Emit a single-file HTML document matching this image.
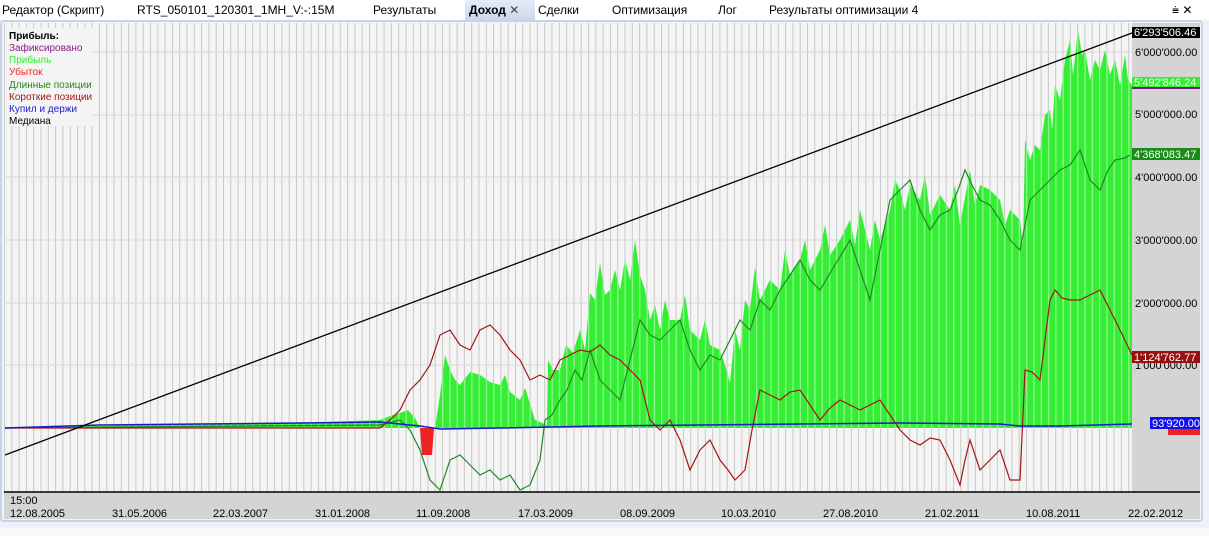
<!DOCTYPE html>
<html><head><meta charset="utf-8"><style>
body{margin:0;width:1209px;height:536px;overflow:hidden;background:#eef2f8;font-family:"Liberation Sans","DejaVu Sans",sans-serif;}
.tabs{position:absolute;left:0;top:0;width:1209px;height:20px;background:#fff;font-size:12px;color:#000}
.tabs span{position:absolute;top:3px}
</style></head><body>
<div class="tabs">
<span style="left:2px">Редактор (Скрипт)</span>
<span style="left:137px">RTS_050101_120301_1MH_V:-:15M</span>
<span style="left:373px">Результаты</span>
<div style="position:absolute;left:465px;top:0;width:70px;height:20px;background:linear-gradient(#e4edf7,#c9d9ec)"></div>
<span style="left:469px;font-weight:bold">Доход <span style="position:static;font-weight:normal;color:#444">✕</span></span>
<span style="left:538px">Сделки</span>
<span style="left:612px">Оптимизация</span>
<span style="left:718px">Лог</span>
<span style="left:769px">Результаты оптимизации 4</span>
<span style="left:1172px">⩧ ✕</span>
</div>
<div style="position:absolute;left:0;top:20px;width:1203px;height:502px;border:2px solid #c3d5ea;border-radius:4px;background:#f4f4f4;box-sizing:border-box"></div>
<svg style="position:absolute;left:0;top:0" width="1209" height="536" xmlns="http://www.w3.org/2000/svg">
<defs><pattern id="vg" x="4" y="0" width="7.3" height="10" patternUnits="userSpaceOnUse"><rect x="0" y="0" width="1" height="10" fill="#c8c8c8"/></pattern>
<pattern id="vg2" x="4" y="0" width="7.3" height="10" patternUnits="userSpaceOnUse"><rect x="0" y="0" width="1.3" height="10" fill="#8ff58f"/></pattern>
<clipPath id="gc"><polygon points="5,428 100,426 200,424 300,423 380,420 390,416 400,413 408,410 415,418 420,428 435,428 440,395 445,355 450,370 455,380 460,385 470,372 480,375 490,382 500,385 505,375 510,392 520,400 525,388 535,420 547,425 548,360 553,370 560,370 566,345 573,353 580,330 585,350 590,293 595,300 600,263 605,295 610,290 615,270 620,290 625,260 630,280 635,240 640,275 645,290 650,320 655,305 660,330 665,300 670,320 680,320 685,295 690,330 700,340 705,320 710,345 720,350 725,365 730,383 735,330 740,350 745,300 750,310 755,267 760,300 770,280 780,290 785,250 790,275 800,260 805,240 810,270 820,250 825,225 830,255 840,240 850,220 855,245 860,210 870,250 875,220 880,240 890,210 895,180 900,190 905,210 910,185 920,200 925,175 930,215 940,195 950,210 955,185 960,225 970,170 975,205 980,185 990,190 1000,200 1005,225 1010,210 1020,220 1023,245 1025,140 1030,160 1035,145 1040,150 1045,115 1050,110 1052,130 1055,85 1060,100 1065,60 1070,40 1073,75 1078,30 1082,55 1085,50 1090,80 1095,60 1100,70 1105,50 1110,75 1115,60 1120,85 1125,55 1128,80 1132,85 1132,428"/></clipPath></defs>
<rect x="4" y="23" width="1128" height="469" fill="#f4f4f4"/>
<rect x="4" y="23" width="1128" height="469" fill="url(#vg)"/>
<g stroke="#d8d8d8" stroke-width="1">
<line x1="4" x2="1132" y1="52" y2="52"/><line x1="4" x2="1132" y1="115" y2="115"/><line x1="4" x2="1132" y1="177" y2="177"/><line x1="4" x2="1132" y1="240" y2="240"/><line x1="4" x2="1132" y1="303" y2="303"/><line x1="4" x2="1132" y1="365" y2="365"/></g>
<rect x="1132" y="23" width="68" height="469" fill="#d4d4d4"/>
<rect x="4" y="492" width="1196" height="27" fill="#d4d4d4"/>
<line x1="4" x2="1200" y1="492" y2="492" stroke="#000" stroke-width="1.5"/>
<g clip-path="url(#gc)"><rect x="4" y="23" width="1128" height="410" fill="#33ee33"/><rect x="4" y="23" width="1128" height="410" fill="url(#vg2)"/></g>
<polygon fill="#ee2222" points="420,428 422,455 432,455 434,428"/>
<polyline fill="none" stroke="#228822" stroke-width="1.2" points="5,428 380,425 400,420 410,430 420,450 430,480 440,490 450,460 460,455 470,465 480,475 490,470 500,480 510,475 520,490 530,485 540,460 545,420 552,415 560,400 567,390 575,370 582,380 590,350 595,365 600,380 610,390 620,400 630,360 640,320 650,335 660,340 670,330 680,320 690,350 700,370 710,355 720,360 730,340 740,320 750,330 760,300 770,310 780,290 790,275 800,260 810,280 820,290 835,265 850,240 860,270 870,300 880,250 890,200 900,190 910,180 920,210 930,230 940,215 950,210 958,190 965,170 972,185 980,200 990,205 1000,220 1010,240 1020,250 1030,200 1045,185 1060,170 1070,165 1080,150 1085,165 1090,180 1100,190 1108,170 1115,160 1125,158 1130,155"/>
<polyline fill="none" stroke="#a01818" stroke-width="1.2" points="5,428 380,428 390,420 400,410 410,390 420,380 430,365 440,335 450,330 460,345 470,350 480,330 490,325 500,335 510,350 520,360 530,380 540,375 550,380 560,360 570,355 580,350 590,352 600,345 610,355 620,360 630,370 640,380 650,420 660,430 670,420 680,440 690,470 700,450 710,440 720,460 728,470 735,480 745,470 752,430 760,390 770,395 780,400 790,392 800,390 810,405 820,420 830,408 840,400 850,405 860,410 870,405 880,400 890,415 900,430 910,440 920,445 930,438 940,440 950,460 960,485 965,460 970,440 975,455 980,470 990,460 1000,450 1010,480 1020,480 1025,370 1032,372 1040,380 1045,340 1050,300 1055,290 1062,298 1070,300 1080,300 1090,295 1100,290 1105,300 1110,310 1120,330 1132,355"/>
<polyline fill="none" stroke="#1a1acc" stroke-width="1.5" points="5,428 100,425 200,424 300,423 380,422 420,426 440,429 500,428 600,426 700,425 800,424 900,423 1000,424 1020,426 1060,426 1132,424"/>
<line x1="5" y1="455" x2="1132" y2="33" stroke="#000" stroke-width="1.3"/>
<g font-size="11" fill="#000">
<text x="1135" y="56">6'000'000.00</text><text x="1135" y="118">5'000'000.00</text><text x="1135" y="181">4'000'000.00</text><text x="1135" y="244">3'000'000.00</text><text x="1135" y="307">2'000'000.00</text><text x="1135" y="369">1'000'000.00</text>
</g>
<g font-size="11" fill="#fff">
<rect x="1132" y="27" width="68" height="11" fill="#000"/><text x="1134" y="36">6'293'506.46</text>
<rect x="1132" y="77" width="68" height="12" fill="#7a1a7a"/><rect x="1132" y="77" width="68" height="10" fill="#33ee33"/><text x="1134" y="86">5'492'846.24</text>
<rect x="1132" y="148" width="68" height="12" fill="#1a8a1a"/><text x="1134" y="158">4'368'083.47</text>
<rect x="1132" y="351" width="68" height="12" fill="#9a1010"/><text x="1134" y="361">1'124'762.77</text>
<rect x="1168" y="428" width="32" height="7" fill="#ee2222"/>
<rect x="1150" y="417" width="50" height="12" fill="#1010ee"/><text x="1152" y="427">93'920.00</text>
</g>
<g font-size="11" fill="#000">
<text x="10" y="504">15:00</text>
<text x="10" y="517">12.08.2005</text><text x="112" y="517">31.05.2006</text><text x="213" y="517">22.03.2007</text><text x="315" y="517">31.01.2008</text><text x="416" y="517">11.09.2008</text><text x="518" y="517">17.03.2009</text><text x="620" y="517">08.09.2009</text><text x="721" y="517">10.03.2010</text><text x="823" y="517">27.08.2010</text><text x="925" y="517">21.02.2011</text><text x="1026" y="517">10.08.2011</text><text x="1128" y="517">22.02.2012</text>
</g>
<rect x="5" y="28" width="88" height="98" fill="#f4f4f4"/>
<g font-size="10">
<text x="9" y="39" font-weight="bold">Прибыль:</text>
<text x="9" y="51" fill="#8a1a8a">Зафиксировано</text>
<text x="9" y="63" fill="#33ee33">Прибыль</text>
<text x="9" y="75" fill="#ee2222">Убыток</text>
<text x="9" y="88" fill="#228822">Длинные позиции</text>
<text x="9" y="100" fill="#a01818">Короткие позиции</text>
<text x="9" y="112" fill="#1a1acc">Купил и держи</text>
<text x="9" y="124" fill="#000">Медиана</text>
</g>
<rect x="0" y="528" width="1209" height="8" fill="#fafafa"/>
</svg>
</body></html>
